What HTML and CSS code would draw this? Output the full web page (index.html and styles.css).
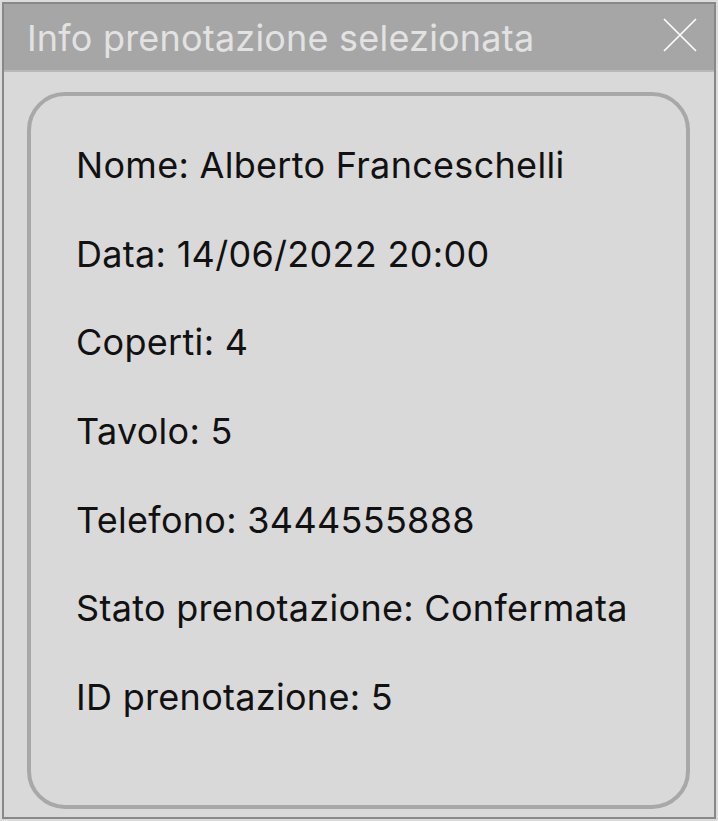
FILE: index.html
```html
<!DOCTYPE html>
<html>
<head>
<meta charset="utf-8">
<link rel="stylesheet" href="styles.css">
</head>
<body>
<div class="window">
  <div class="titlebar">
    <span class="title">Info prenotazione selezionata</span>
    <svg class="close" width="34" height="34" viewBox="0 0 34 34"><path d="M1 1 L33 33 M33 1 L1 33" stroke="#ffffff" stroke-width="1.6" fill="none"/></svg>
  </div>
  <div class="body">
    <div class="card">
      <p class="row">Nome: Alberto Franceschelli</p>
      <p class="row">Data: 14/06/2022 20:00</p>
      <p class="row">Coperti: 4</p>
      <p class="row">Tavolo: 5</p>
      <p class="row">Telefono: 3444555888</p>
      <p class="row">Stato prenotazione: Confermata</p>
      <p class="row">ID prenotazione: 5</p>
    </div>
  </div>
</div>
</body>
</html>
```
FILE: styles.css
```css
html, body {
  margin: 0;
  padding: 0;
  background: #dcdcdc;
}
body {
  padding: 2px;
  width: 718px;
  height: 821px;
  box-sizing: border-box;
  font-family: Inter, "Noto Sans", sans-serif;
}
.window {
  width: 714px;
  height: 817px;
  box-sizing: border-box;
  border: 2px solid #888888;
  background: #d9d9d9;
  display: flex;
  flex-direction: column;
}
.titlebar {
  height: 66px;
  flex: 0 0 auto;
  background: #a6a6a6;
  border-bottom: 2px solid #b8b8b8;
  display: flex;
  align-items: center;
  justify-content: space-between;
  padding: 0 17px 0 23px;
}
.title {
  color: #e2e2e2;
  font-size: 36px;
  font-weight: 400;
  letter-spacing: 0.2px;
  margin-top: 2px;
}
.close {
  display: block;
  margin-top: -5px;
}
.body {
  flex: 1;
  padding: 20px 24px 8px 23px;
  display: flex;
}
.card {
  flex: 1;
  border: 4px solid #a8a8a8;
  border-radius: 38px;
  padding: 45px 0 0 45px;
}
.row {
  margin: 0 0 40.7px 0;
  font-size: 36px;
  line-height: 48px;
  letter-spacing: 0.3px;
  color: #111111;
}
```
